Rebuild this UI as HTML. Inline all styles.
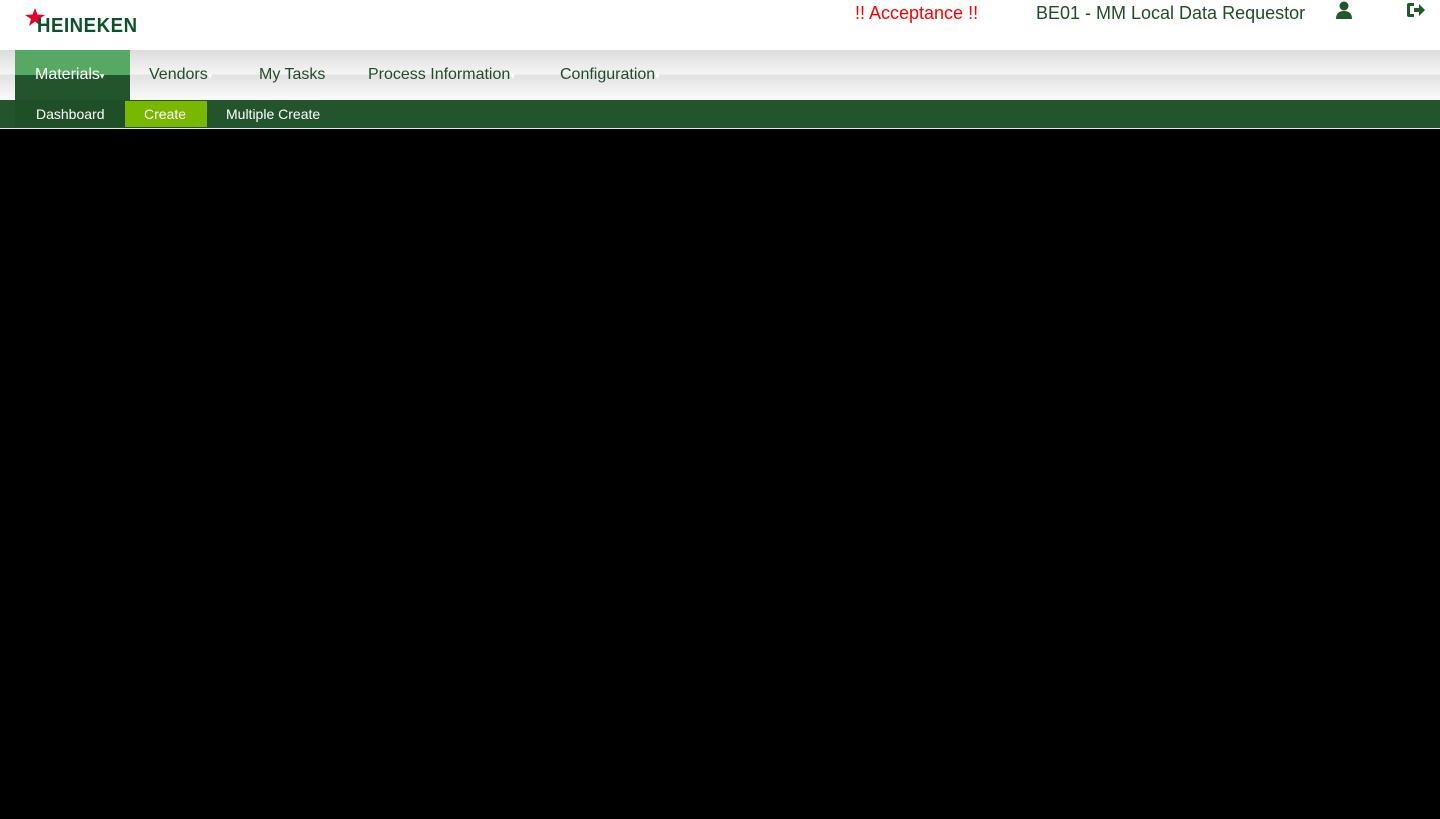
<!DOCTYPE html>
<html><head><style>
body{margin:0;width:1440px;height:819px;background:#000;font-family:"Liberation Sans",sans-serif;overflow:hidden;position:relative}
.top{position:absolute;left:0;top:0;width:1440px;height:50px;background:#fff}
.nav{position:absolute;left:0;top:50px;width:1440px;height:50px;background:linear-gradient(#dcdcdc 0%,#f4f4f4 48%,#e2e2e2 50%,#fafafa 100%)}
.nav span{position:absolute;top:16px;font-size:16px;color:#1f4d26}
.mat{position:absolute;left:15px;top:50px;width:115px;height:50px;background:linear-gradient(#56a862 0 50%,#22552b 50% 100%)}
.sub{position:absolute;left:0;top:100px;width:1440px;height:28px;background:#22552b;border-bottom:1px solid #e8e8e8}
.sub span{position:absolute;top:6px;font-size:14px;color:#fff}
</style></head><body>
<div class="top">
<svg style="position:absolute;left:24px;top:8px" width="22" height="20" viewBox="0 0 22 20"><polygon points="11,0 13.5,6.5 21,7 15,11 17,18 11,13.5 5,18 7,11 1,7 8.5,6.5" fill="#e4002b"/></svg>
<div style="position:absolute;left:37px;top:15px;font-size:20px;font-weight:bold;color:#0b5229;letter-spacing:0.6px;transform:scaleX(0.93);transform-origin:left">HEINEKEN</div>
<div style="position:absolute;left:855px;top:3px;font-size:18px;color:#ff0000">!! Acceptance !!</div>
<div style="position:absolute;left:1036px;top:3px;font-size:18px;color:#1f4d26">BE01 - MM Local Data Requestor</div>
<svg style="position:absolute;left:1335px;top:1px" width="18" height="18" viewBox="0 0 18 18"><circle cx="9" cy="5" r="4.5" fill="#1f5a2a"/><path d="M1 18 Q1 10 9 10 Q17 10 17 18Z" fill="#1f5a2a"/></svg>
<svg style="position:absolute;left:1406px;top:2px" width="20" height="16" viewBox="0 0 20 16"><path d="M8 1H3Q1 1 1 3V13Q1 15 3 15H8V12H4V4H8Z" fill="#1f5a2a"/><path d="M8 6H13V2L19 8L13 14V10H8Z" fill="#1f5a2a"/></svg>
</div>
<div class="nav">
<span style="left:149px">Vendors<small style="color:#fff;font-size:9px">▾</small></span>
<span style="left:259px">My Tasks</span>
<span style="left:368px">Process Information<small style="color:#fff;font-size:9px">▾</small></span>
<span style="left:560px">Configuration<small style="color:#fff;font-size:9px">▾</small></span>
</div>
<div class="mat"><span style="position:absolute;left:20px;top:16px;font-size:16px;color:#fff">Materials<small style="font-size:9px">▾</small></span></div>
<div class="sub">
<div style="position:absolute;left:15px;top:0;width:110px;height:27px;background:#1e4f27"></div>
<div style="position:absolute;left:125px;top:1px;width:82px;height:26px;background:#7ab800"></div>
<span style="left:36px">Dashboard</span>
<span style="left:144px">Create</span>
<span style="left:226px">Multiple Create</span>
</div>
</body></html>
